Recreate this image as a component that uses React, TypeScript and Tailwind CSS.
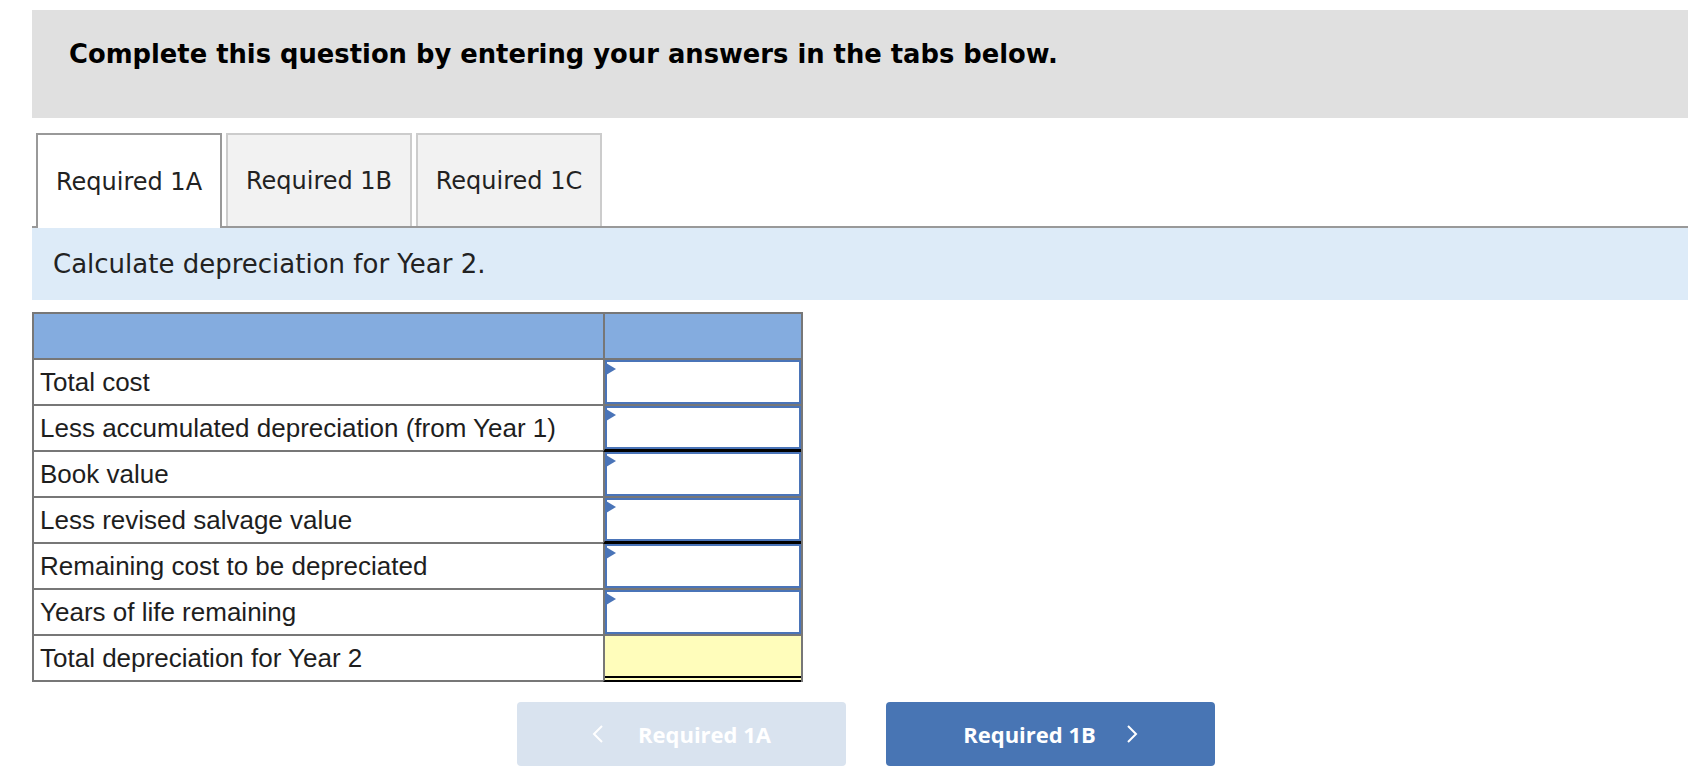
import React from 'react';

const rows = [
    { label: 'Total cost', kind: 'input', underline: false },
    { label: 'Less accumulated depreciation (from Year 1)', kind: 'input', underline: true },
    { label: 'Book value', kind: 'input', underline: false },
    { label: 'Less revised salvage value', kind: 'input', underline: true },
    { label: 'Remaining cost to be depreciated', kind: 'input', underline: false },
    { label: 'Years of life remaining', kind: 'input', underline: false },
    { label: 'Total depreciation for Year 2', kind: 'total', underline: false },
];

const tabs = ['Required 1A', 'Required 1B', 'Required 1C'];

const InputCell: React.FC = () => (
    <div className="relative h-full w-full border-2 border-[#4a74b8] bg-white">
        <span className="absolute left-[-1px] top-[1px] h-0 w-0 border-y-[6px] border-l-[10px] border-y-transparent border-l-[#4a74b8]" />
    </div>
);

const Chevron: React.FC<{ dir: 'left' | 'right' }> = ({ dir }) => (
    <svg width="12" height="18" viewBox="0 0 12 18" fill="none" stroke="white" strokeWidth={2}>
        {dir === 'left' ? <polyline points="10,1 2,9 10,17" /> : <polyline points="2,1 10,9 2,17" />}
    </svg>
);

export default function App() {
    return (
        <div className="min-h-screen bg-white pl-[32px] pt-[10px] font-['DejaVu_Sans',Verdana,sans-serif]">
            <div className="h-[108px] bg-[#e0e0e0] pl-[37px] pt-[29px] text-[25.8px] font-bold leading-[30px] text-black">
                Complete this question by entering your answers in the tabs below.
            </div>

            <div className="mt-[15px] flex items-end gap-[4px] border-b-2 border-[#999] pl-[4px]">
                {tabs.map((t, i) =>
                    i === 0 ? (
                        <div key={t} className="-mb-[2px] flex h-[95px] w-[186px] items-center justify-center border-2 border-b-0 border-[#999] bg-white text-[24px] text-[#222]">
                            {t}
                        </div>
                    ) : (
                        <div key={t} className="flex h-[93px] w-[186px] items-center justify-center border-2 border-b-0 border-[#ccc] bg-[#f2f2f2] text-[24px] text-[#222]">
                            {t}
                        </div>
                    )
                )}
            </div>

            <div className="flex h-[72px] items-center bg-[#ddebf8] pl-[21px] text-[26px] text-[#222]">
                Calculate depreciation for Year 2.
            </div>

            <div className="mt-[12px] w-[771px] border-x-2 border-t-2 border-[#777] font-['Liberation_Sans',Arial,sans-serif] text-[26px] text-[#1e1e1e]">
                <div className="flex h-[46px]">
                    <div className="w-[569px] border-b-2 border-[#777] bg-[#84acdf]" />
                    <div className="flex-1 border-b-2 border-l-2 border-[#777] bg-[#84acdf]" />
                </div>
                {rows.map(row => (
                    <div key={row.label} className="flex h-[46px]">
                        <div className="flex w-[569px] items-center border-b-2 border-[#777] pl-[6px]">
                            {row.label}
                        </div>
                        {row.kind === 'input' ? (
                            <div className={`flex-1 border-l-2 border-[#777] ${row.underline ? 'border-b-[3px] border-b-black' : 'border-b-2'}`}>
                                <InputCell />
                            </div>
                        ) : (
                            <div className="flex flex-1 flex-col border-b-2 border-l-2 border-[#777] border-b-black bg-[#fffdbb]">
                                <div className="flex-1" />
                                <div className="h-[2px] bg-black" />
                                <div className="h-[2px]" />
                            </div>
                        )}
                    </div>
                ))}
            </div>

            <div className="ml-[485px] mt-[20px] flex gap-[40px] font-['Open_Sans',sans-serif] text-[22px] font-bold text-white">
                <div className="flex h-[64px] w-[329px] items-center justify-center gap-[34px] rounded-[4px] bg-[#d9e3ef]">
                    <Chevron dir="left" />
                    <span>Required 1A</span>
                </div>
                <div className="flex h-[64px] w-[329px] items-center justify-center gap-[30px] rounded-[4px] bg-[#4875b4]">
                    <span>Required 1B</span>
                    <Chevron dir="right" />
                </div>
            </div>
        </div>
    );
}
